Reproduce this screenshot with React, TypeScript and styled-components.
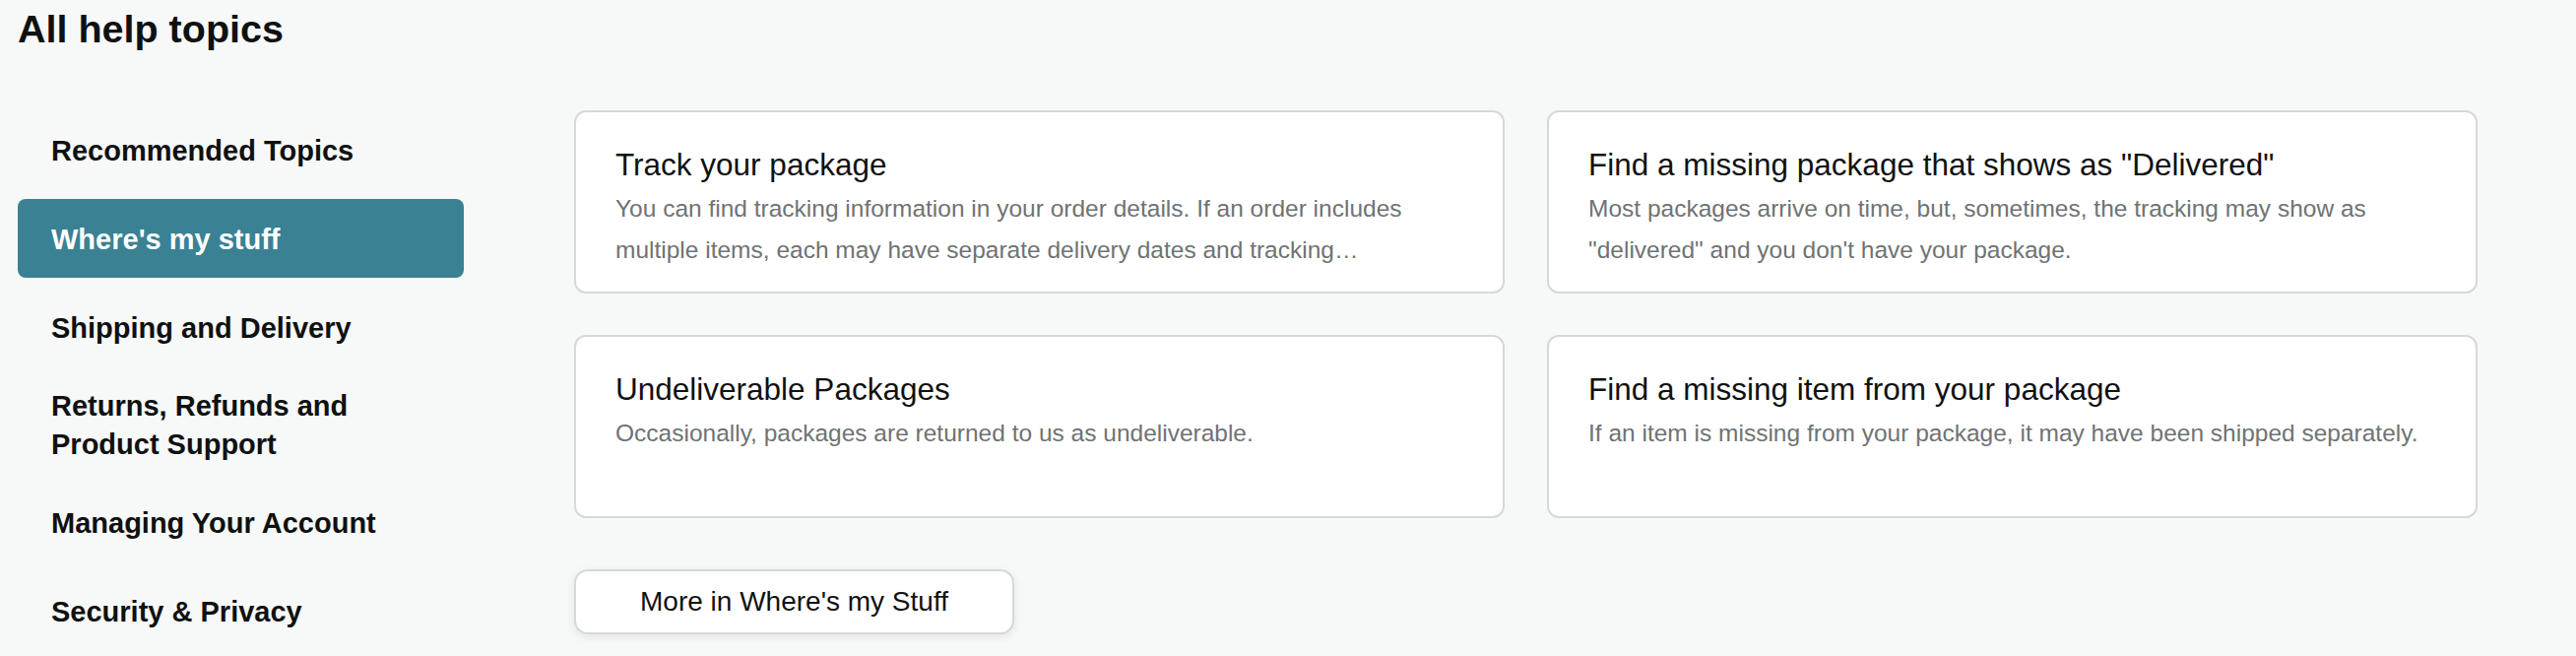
import styled, { createGlobalStyle } from 'styled-components';

const GlobalStyle = createGlobalStyle`
	html, body {
		margin: 0;
		padding: 0;
		background: #f7f8f8;
		font-family: "Liberation Sans", Arial, sans-serif;
		color: #0f1111;
	}
`;

const Page = styled.div`
	padding: 6px 100px 0 18px;
`;

const Heading = styled.h1`
	margin: 0;
	font-size: 39.5px;
	line-height: 47px;
	font-weight: 700;
`;

const Layout = styled.div`
	display: flex;
	gap: 112px;
	margin-top: 59px;
`;

const Sidebar = styled.nav`
	width: 453px;
	flex-shrink: 0;
	display: flex;
	flex-direction: column;
	gap: 10px;
`;

const SideItem = styled.a<{ $active?: boolean }>`
	display: flex;
	align-items: center;
	box-sizing: border-box;
	min-height: 80px;
	padding: 11px 20px 9px 34px;
	border-radius: 8px;
	font-size: 29px;
	line-height: 39px;
	font-weight: 700;
	cursor: pointer;
	background: ${(p) => (p.$active ? '#3a8194' : 'transparent')};
	color: ${(p) => (p.$active ? '#ffffff' : '#0f1111')};
`;

const Main = styled.main`
	display: flex;
	flex-direction: column;
	align-items: flex-start;
`;

const CardGrid = styled.div`
	display: grid;
	grid-template-columns: 945px 945px;
	column-gap: 43px;
	row-gap: 42px;
`;

const Card = styled.div`
	box-sizing: border-box;
	height: 186px;
	padding: 33px 40px 0 40px;
	background: #ffffff;
	border: 2px solid #d5d9d9;
	border-radius: 12px;
`;

const CardTitle = styled.h3`
	margin: 0;
	font-size: 31.5px;
	line-height: 40px;
	font-weight: 400;
	color: #0f1111;
`;

const CardText = styled.p`
	margin: 4px 0 0;
	font-size: 24.5px;
	line-height: 42px;
	color: #6f7373;
`;

const MoreButton = styled.button`
	margin-top: 52px;
	width: 447px;
	height: 66px;
	background: #ffffff;
	border: 2px solid #d5d9d9;
	border-radius: 14px;
	box-shadow: 0 3px 8px rgba(213, 217, 217, 0.6);
	font-family: "Liberation Sans", Arial, sans-serif;
	font-size: 28px;
	color: #0f1111;
	cursor: pointer;
`;

const topics = [
	{ label: 'Recommended Topics' },
	{ label: "Where's my stuff", active: true },
	{ label: 'Shipping and Delivery' },
	{ label: 'Returns, Refunds and Product Support' },
	{ label: 'Managing Your Account' },
	{ label: 'Security & Privacy' },
];

const cards = [
	{
		title: 'Track your package',
		text: 'You can find tracking information in your order details. If an order includes multiple items, each may have separate delivery dates and tracking…',
	},
	{
		title: 'Find a missing package that shows as "Delivered"',
		text: 'Most packages arrive on time, but, sometimes, the tracking may show as "delivered" and you don\'t have your package.',
	},
	{
		title: 'Undeliverable Packages',
		text: 'Occasionally, packages are returned to us as undeliverable.',
	},
	{
		title: 'Find a missing item from your package',
		text: 'If an item is missing from your package, it may have been shipped separately.',
	},
];

export default function App() {
	return (
		<>
			<GlobalStyle />
			<Page>
				<Heading>All help topics</Heading>
				<Layout>
					<Sidebar>
						{topics.map((t) => (
							<SideItem key={t.label} $active={t.active}>
								{t.label === 'Returns, Refunds and Product Support' ? (
									<span>
										Returns, Refunds and
										<br />
										Product Support
									</span>
								) : (
									t.label
								)}
							</SideItem>
						))}
					</Sidebar>
					<Main>
						<CardGrid>
							{cards.map((c) => (
								<Card key={c.title}>
									<CardTitle>{c.title}</CardTitle>
									<CardText>{c.text}</CardText>
								</Card>
							))}
						</CardGrid>
						<MoreButton>More in Where's my Stuff</MoreButton>
					</Main>
				</Layout>
			</Page>
		</>
	);
}
